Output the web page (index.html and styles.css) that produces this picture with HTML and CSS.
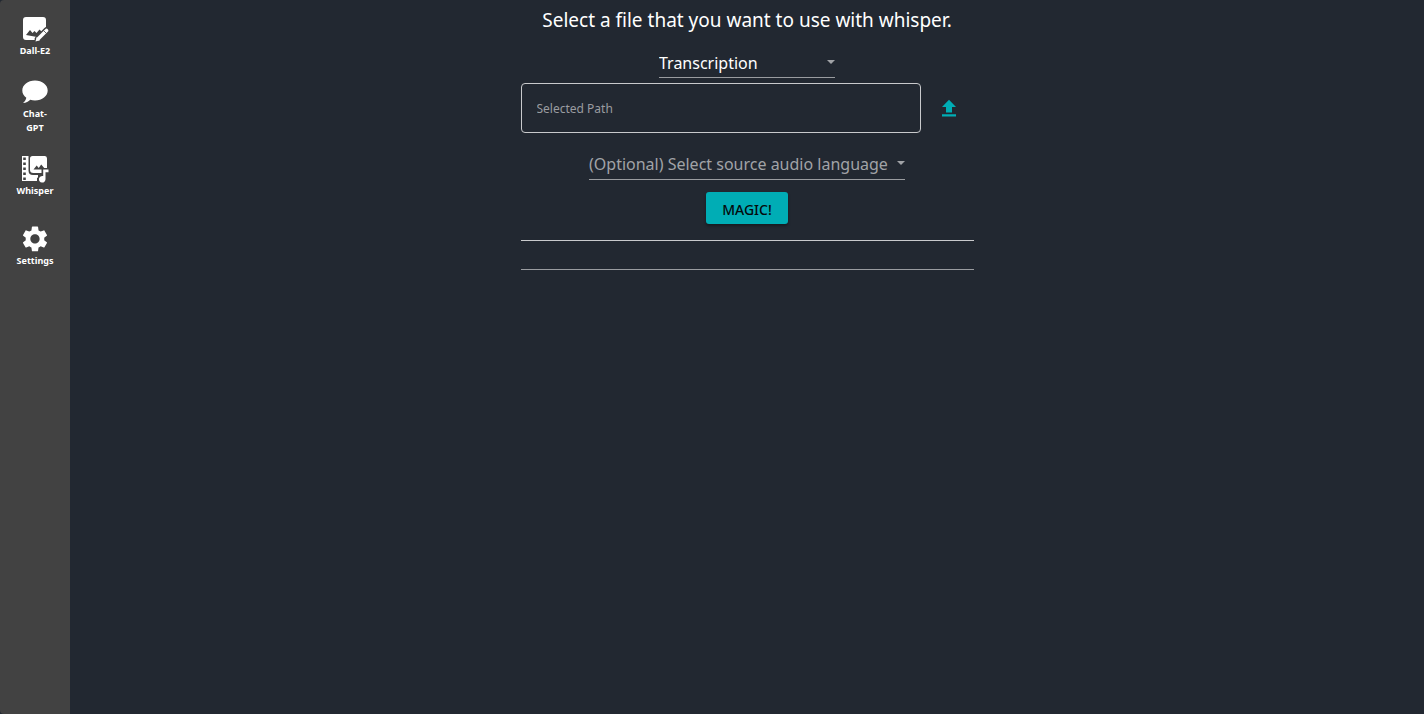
FILE: index.html
```html
<!DOCTYPE html>
<html lang="en">
<head>
<meta charset="utf-8">
<title>Whisper</title>
<link rel="stylesheet" href="styles.css">
</head>
<body>
<div class="app">
  <nav class="sidebar">
    <a class="nav-item" href="#dalle">
      <svg class="nav-icon" viewBox="0 0 28 28" aria-hidden="true">
        <path fill="#fff" d="M5 2h17q3 0 3 3v7.500L15 22.500V25H5q-3 0-3-3V5q0-3 3-3z"/>
        <path fill="#424242" d="M5 20l4-5 2.500 3 2-2 2 2 3-3.500 2 2-4.500 5.500z"/>
        <path d="M17 24l8.500-8.500" stroke="#424242" stroke-width="6.500" stroke-linecap="round"/>
        <path d="M17.500 23.500l8-8" stroke="#fff" stroke-width="3.600" stroke-linecap="round"/>
        <path d="M14.500 26.500l1.200-4.500 3.300 3.300z" fill="#fff"/>
        <path d="M22.500 15.500l3 3" stroke="#424242" stroke-width=".8"/>
      </svg>
      <span>Dall-E2</span>
    </a>
    <a class="nav-item" href="#chat">
      <svg class="nav-icon" viewBox="0 0 28 28" aria-hidden="true">
        <path fill="#fff" d="M14 2.500C6.800 2.500 1.300 7 1.300 12.500c0 3 1.500 5.500 4 7.300C5 22 3.500 23.700 2 25c3 0 5.500-1.200 7.200-3.200 1.500.5 3.100.7 4.800.7 7.200 0 12.700-4.500 12.700-10S21.200 2.500 14 2.500z"/>
      </svg>
      <span>Chat-<br>GPT</span>
    </a>
    <a class="nav-item" href="#whisper">
      <svg class="nav-icon" viewBox="0 0 28 28" aria-hidden="true">
        <path fill="#fff" d="M1 1h6.500v14.500q0 4.500 4.500 4.500h5v6H1z"/>
        <path d="M3.500 2.500v23" stroke="#424242" stroke-width="2.600" stroke-dasharray="2.600 2.400"/>
        <path fill="#fff" d="M11.500 1h12.500Q26 1 26 3.500V13h-5v5h-8.500Q9 18 9 15V3.500Q9 1 11.500 1z"/>
        <path fill="#424242" d="M12.500 14.500l3.200-4 2 2.500 2.500-3.500 3 3.500-2.500 1.500z"/>
        <path d="M20.500 13.500H28V19h-2.500v8H16v-4l4.500-3z" fill="#424242"/>
        <path fill="#fff" d="M22.200 14.500h5.300v2.700h-3v7a3.300 3.300 0 1 1-2.300-3.100z"/>
      </svg>
      <span>Whisper</span>
    </a>
    <a class="nav-item" href="#settings">
      <svg class="nav-icon" viewBox="0 0 28 28" aria-hidden="true">
        <g transform="translate(-1.500 -1.500) scale(1.290)"><path fill="#fff" d="M19.140 12.940c.040-.300.060-.610.060-.940 0-.320-.020-.640-.070-.940l2.030-1.580c.180-.140.230-.410.120-.610l-1.920-3.320c-.120-.220-.370-.290-.590-.220l-2.390.960c-.500-.380-1.030-.700-1.620-.940l-.360-2.540c-.040-.240-.240-.410-.480-.410h-3.840c-.240 0-.430.170-.470.410l-.360 2.540c-.590.240-1.130.570-1.620.940l-2.390-.960c-.220-.080-.470 0-.590.220L2.740 8.870c-.120.210-.080.470.120.610l2.030 1.580c-.050.300-.090.630-.090.940s.020.640.070.940l-2.030 1.580c-.180.140-.230.410-.120.610l1.920 3.320c.120.220.370.290.590.220l2.390-.960c.500.380 1.030.700 1.620.940l.360 2.540c.050.240.240.410.480.410h3.840c.240 0 .440-.170.470-.410l.360-2.540c.590-.240 1.130-.560 1.620-.940l2.390.960c.220.080.470 0 .590-.220l1.920-3.320c.120-.220.070-.470-.120-.610l-2.010-1.580zM12 15.600c-1.980 0-3.600-1.620-3.600-3.600s1.620-3.600 3.600-3.600 3.600 1.620 3.600 3.600-1.620 3.600-3.600 3.600z"/></g>
      </svg>
      <span>Settings</span>
    </a>
  </nav>
  <main class="content">
    <h1 class="title">Select a file that you want to use with whisper.</h1>
    <div class="panel">
      <div class="select select-mode">
        <select aria-label="Mode"><option>Transcription</option></select>
        <svg class="caret" viewBox="0 0 8 4" aria-hidden="true"><path d="M0 0h8L4 4z"/></svg>
      </div>
      <div class="path-row">
        <input class="path" type="text" placeholder="Selected Path" aria-label="Selected Path">
        <button class="upload" type="button" aria-label="Upload file">
          <svg viewBox="0 0 16 18" aria-hidden="true"><path d="M5 13.500h6V8h4L8 .8 1 8h4zM1 15.200h14v2.200H1z"/></svg>
        </button>
      </div>
      <div class="select select-language">
        <select aria-label="Source audio language"><option>(Optional) Select source audio language</option></select>
        <svg class="caret" viewBox="0 0 8 4" aria-hidden="true"><path d="M0 0h8L4 4z"/></svg>
      </div>
      <button class="magic" type="button">MAGIC!</button>
      <div class="result"></div>
    </div>
  </main>
</div>
</body>
</html>
```
FILE: styles.css
```css
* { box-sizing: border-box; }
body {
  margin: 0;
  background: #222831;
  color: #fff;
  font-family: "Segoe UI", "Noto Sans", "Open Sans", sans-serif;
}
.app { display: flex; min-height: 100vh; }
.sidebar {
  flex: 0 0 70px;
  display: flex;
  flex-direction: column;
  align-items: center;
  gap: 20px;
  padding-top: 15px;
  background: #424242;
  border-radius: 4px 0 0 4px;
}
.nav-item {
  display: flex;
  flex-direction: column;
  align-items: center;
  gap: 1px;
  color: #fff;
  font-size: 9px;
  font-weight: 700;
  line-height: 14px;
  text-align: center;
  text-decoration: none;
}
.nav-item:last-child { margin-top: 7px; }
.nav-icon { width: 28px; height: 28px; }
.content {
  flex: 1;
  display: flex;
  flex-direction: column;
  align-items: center;
}
.title {
  margin: 4px 0 12px;
  font-size: 19px;
  font-weight: 400;
  line-height: 32px;
}
.panel {
  width: 100%;
  max-width: 453px;
  display: flex;
  flex-direction: column;
  align-items: center;
}
.select {
  display: grid;
  align-items: center;
  max-width: 100%;
  padding-bottom: 2px;
  border-bottom: 1px solid #9a9ca0;
}
.select-mode { width: 176px; height: 30px; }
.select-language { width: 316px; height: 32px; color: #a1a3a7; }
.select select, .caret { grid-area: 1 / 1; }
.select select {
  width: 100%;
  padding: 2px 0 0;
  border: 0;
  appearance: none;
  background: transparent;
  color: inherit;
  font-family: inherit;
  font-size: 16px;
  line-height: 24px;
}
.caret {
  justify-self: end;
  width: 8px;
  height: 4px;
  fill: #a1a3a7;
  pointer-events: none;
}
.path-row {
  display: flex;
  align-items: center;
  width: 100%;
  margin: 5px 0 15px;
}
.path {
  flex: 1;
  min-width: 0;
  height: 50px;
  padding: 0 15px;
  border: 1px solid #c9cacc;
  border-radius: 4px;
  background: transparent;
  color: #fff;
  font-family: inherit;
  font-size: 12px;
}
.path::placeholder { color: #9a9ca0; opacity: 1; }
.upload {
  flex: 0 0 53px;
  display: flex;
  justify-content: center;
  padding: 0 0 0 4px;
  border: 0;
  background: transparent;
}
.upload svg { width: 16px; height: 18px; fill: #00adb5; }
.magic {
  height: 32px;
  margin: 12px 0 16px;
  padding: 2px 16px 0;
  border: 0;
  border-radius: 3px;
  background: #00adb5;
  color: #050a0c;
  font-family: inherit;
  font-size: 14px;
  font-weight: 500;
  box-shadow: 0 2px 3px rgba(0, 0, 0, .35);
}
.result {
  width: 100%;
  height: 30px;
  border-top: 1px solid #c9cacc;
  border-bottom: 1px solid #9a9ca0;
}
```
